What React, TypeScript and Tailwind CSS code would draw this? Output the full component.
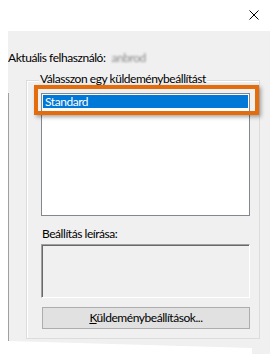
import React from "react";

export default function App() {
  const font = { fontFamily: 'Lato, "Noto Sans", sans-serif' };
  return (
    <div
      className="w-[270px] h-[354px] bg-white overflow-hidden text-[12px] leading-[16px] tracking-[-0.45px] text-black"
      style={font}
    >
      {/* title bar */}
      <div className="h-[31px] flex justify-end">
        <svg
          className="mt-[10px] mr-[11px]"
          width="10"
          height="10"
          viewBox="0 0 10 10"
        >
          <path d="M0.5 0.5 L9.5 9.5 M9.5 0.5 L0.5 9.5" stroke="#000" strokeWidth="1" />
        </svg>
      </div>

      {/* body */}
      <div className="ml-[8px] w-[262px] h-[323px] bg-[#f0f0f0] flex flex-col [clip-path:polygon(0_0,262px_0,262px_323px,244px_323px,244px_317px,0_310px)]">
        <div className="pt-[19px] h-[35px] flex items-start">
          <span>Aktuális felhasználó:</span>
          <span className="ml-[6px] text-[#8a8a8a] blur-[1.2px]">anbrod</span>
        </div>

        <div className="mt-[14px] flex flex-row flex-1">
          <div className="w-[18px] pt-[13px] flex flex-col">
            <div className="flex-1 border-l border-[#a0a0a0]" />
          </div>

          <div className="w-[234px] h-[259px] border border-[#dcdcdc] shadow-[inset_1px_1px_0_#ffffff] flex flex-col">
            <div className="-mt-[10px] ml-[12px] px-[1px] w-fit h-[16px] bg-[#f0f0f0]">
              Válasszon egy küldeménybeállítást
            </div>

            <div className="relative mt-[6px] ml-[14px] w-[209px] h-[123px] border border-[#828790] bg-white p-[1px]">
              <div className="h-[13px] bg-[#0078d7] text-white leading-[13px] pl-[2px]">
                Standard
              </div>
              <div className="absolute -left-[8px] -top-[9px] w-[225px] h-[30px] border-[4px] border-[#e46c0a] shadow-[2px_2px_4px_rgba(0,0,0,0.35)]" />
            </div>

            <div className="mt-[10px] ml-[15px] h-[16px]">
              Beállítás leírása:
            </div>

            <div className="mt-[2px] ml-[14px] w-[209px] h-[54px] border border-t-[#a0a0a0] border-l-[#a0a0a0] border-b-white border-r-white shadow-[inset_1px_1px_0_#696969] bg-[#f0f0f0]" />

            <div className="mt-[9px] ml-[15px] w-[208px] h-[22px] bg-[#e1e1e1] border border-[#adadad] flex items-center justify-center">
              <span>
                <span className="underline">K</span>üldeménybeállítások...
              </span>
            </div>
          </div>
        </div>
      </div>
    </div>
  );
}
